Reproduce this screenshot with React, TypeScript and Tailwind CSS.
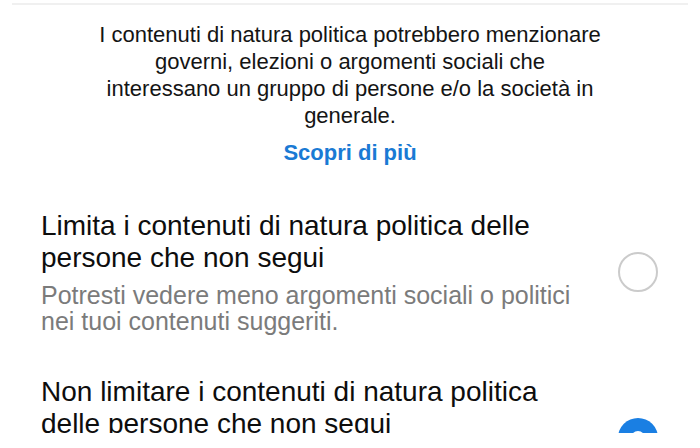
import React from "react";

type Option = {
  title: string[];
  subtitle: string[];
  selected: boolean;
};

const options: Option[] = [
  {
    title: ["Limita i contenuti di natura politica delle", "persone che non segui"],
    subtitle: ["Potresti vedere meno argomenti sociali o politici", "nei tuoi contenuti suggeriti."],
    selected: false,
  },
  {
    title: ["Non limitare i contenuti di natura politica", "delle persone che non segui"],
    subtitle: ["Potresti vedere più argomenti sociali o politici", "nei tuoi contenuti suggeriti."],
    selected: true,
  },
];

function Radio({ selected }: { selected: boolean }) {
  if (selected) {
    return (
      <div className="flex h-[40px] w-[40px] shrink-0 items-center justify-center rounded-full bg-[#1a7fe3]">
        <div className="h-[14px] w-[14px] rounded-full bg-white" />
      </div>
    );
  }
  return <div className="h-[40px] w-[40px] shrink-0 rounded-full border-[2px] border-[#cbcbcb]" />;
}

export default function App() {
  return (
    <div className="h-[448px] w-[700px] overflow-hidden bg-white font-['Liberation_Sans',Arial,sans-serif] antialiased">
      <div className="h-[433px] overflow-hidden">
        <div className="mx-[12px] mt-[3px] h-[2px] bg-[#f0f0f0]" />

        <p className="mt-[16px] text-center text-[22px] leading-[27px] text-[#141414]">
          I contenuti di natura politica potrebbero menzionare
          <br />
          governi, elezioni o argomenti sociali che
          <br />
          interessano un gruppo di persone e/o la società in
          <br />
          generale.
        </p>

        <div className="mt-[10px] text-center text-[22px] font-bold leading-[27px] text-[#1a7ad4]">
          Scopri di più
        </div>

        <div className="mt-[44px] flex flex-col gap-[42px]">
          {options.map((o, i) => (
            <div key={i} className="flex items-center pl-[41px] pr-[42px]">
              <div className="flex-1">
                <div className="text-[28px] leading-[32px] text-[#0d0d0d]">
                  {o.title.map((t, j) => (
                    <div key={j}>{t}</div>
                  ))}
                </div>
                <div className="mt-[8px] text-[25px] leading-[26px] text-[#7b7b7b]">
                  {o.subtitle.map((t, j) => (
                    <div key={j}>{t}</div>
                  ))}
                </div>
              </div>
              <Radio selected={o.selected} />
            </div>
          ))}
        </div>
      </div>
    </div>
  );
}
